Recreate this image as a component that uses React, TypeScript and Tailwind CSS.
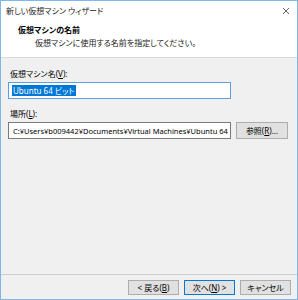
import React from 'react';

const font = "font-['Noto_Sans','Noto_Sans_CJK_JP',sans-serif] [font-feature-settings:'palt']";

const Button: React.FC<{ children: React.ReactNode; primary?: boolean; className?: string }> = ({ children, primary, className }) => (
  <button
    className={`flex items-center justify-center bg-[#e1e1e1] text-[8px] leading-none text-black border ${
      primary ? 'border-[#0078d7]' : 'border-[#adadad]'
    } ${className ?? ''}`}
  >
    {children}
  </button>
);

export default function App() {
  return (
    <div className={`w-[298px] h-[300px] flex flex-col border border-[#80b7eb] bg-[#f0f0f0] overflow-hidden ${font}`}>
      {/* title bar + header */}
      <div className="bg-white border-b border-[#dadada]">
        <div className="h-[19px] flex items-center justify-between pl-[5px] pr-[7px]">
          <span className="text-[8px] text-[#222]">新しい仮想マシン ウィザード</span>
          <svg width="8" height="8" viewBox="0 0 8 8" className="text-[#555]">
            <path d="M1 1L7 7M7 1L1 7" stroke="currentColor" strokeWidth="0.9" />
          </svg>
        </div>
        <div className="h-[37px] pl-[17px] pt-[4px]">
          <div className="text-[8px] font-bold text-black leading-[12px]">仮想マシンの名前</div>
          <div className="text-[8px] text-[#222] leading-[12px] mt-[1px] pl-[17px]">仮想マシンに使用する名前を指定してください。</div>
        </div>
      </div>

      {/* body */}
      <div className="flex-1 flex flex-col px-[7px] pt-[10px]">
        <div className="text-[8px] leading-[12px] text-black pl-[2px]">
          仮想マシン名(<span className="underline">V</span>):
        </div>
        <div className="mt-[2px] w-[223px] h-[17px] bg-white border border-[#5d9fe3] flex items-center pl-[3px]">
          <span className="bg-[#0078d7] text-white text-[8px] leading-[11px] px-[1px]">Ubuntu 64 ビット</span>
        </div>

        <div className="mt-[9px] text-[8px] leading-[12px] text-black pl-[2px]">
          場所(<span className="underline">L</span>):
        </div>
        <div className="mt-[2px] flex items-center gap-[5px]">
          <div className="w-[223px] h-[17px] bg-white border border-[#7a7a7a] flex items-center pl-[4px]">
            <span className="block w-full overflow-hidden whitespace-nowrap text-[7.5px] leading-[10px] text-black">
              C:¥Users¥b009442¥Documents¥Virtual Machines¥Ubuntu 64 ビット
            </span>
          </div>
          <Button className="w-[52px] h-[17px]">
            参照(<span className="underline">R</span>)...
          </Button>
        </div>
      </div>

      {/* footer */}
      <div className="border-t border-[#cfcfcf] h-[25px] flex items-start justify-end gap-[5px] pt-[5px] pr-[6px]">
        <Button className="w-[51px] h-[15px]">
          &lt; 戻る(<span className="underline">B</span>)
        </Button>
        <Button primary className="w-[51px] h-[15px]">
          次へ(<span className="underline">N</span>) &gt;
        </Button>
        <Button className="w-[51px] h-[15px]">キャンセル</Button>
      </div>
    </div>
  );
}
